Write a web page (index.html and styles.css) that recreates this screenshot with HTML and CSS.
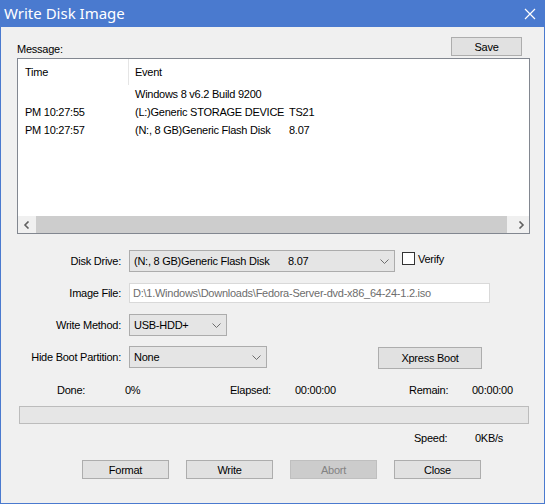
FILE: index.html
```html
<!DOCTYPE html>
<html lang="en">
<head>
    <meta charset="UTF-8">
    <title>Write Disk Image</title>
    <link rel="stylesheet" href="styles.css">
</head>
<body>
    <div class="window">
        <div class="titlebar">
            <span class="title">Write Disk Image</span>
            <svg class="close" width="12" height="12" viewBox="0 0 12 12">
                <path d="M1 1 L11 11 M11 1 L1 11" stroke="#fff" stroke-width="1.2" fill="none"/>
            </svg>
        </div>

        <div class="content">
            <div class="msg-head">
                <span>Message:</span>
                <button class="btn save">Save</button>
            </div>

            <div class="listbox">
                <div class="list-area">
                    <div class="list-header">
                        <div class="col-time">Time</div>
                        <div class="col-event">Event</div>
                    </div>
                    <div class="list-row">
                        <div class="col-time"></div>
                        <div class="col-event">Windows 8 v6.2 Build 9200</div>
                    </div>
                    <div class="list-row">
                        <div class="col-time">PM 10:27:55</div>
                        <div class="col-event"><span class="dev">(L:)Generic STORAGE DEVICE</span>TS21</div>
                    </div>
                    <div class="list-row">
                        <div class="col-time">PM 10:27:57</div>
                        <div class="col-event"><span class="dev">(N:, 8 GB)Generic Flash Disk</span>8.07</div>
                    </div>
                </div>
                <div class="hscroll">
                    <div class="arrow">
                        <svg width="8" height="8" viewBox="0 0 8 8"><path d="M5.5 0.5 L2 4 L5.5 7.5" stroke="#606060" stroke-width="1.6" fill="none"/></svg>
                    </div>
                    <div class="track"><div class="thumb"></div></div>
                    <div class="arrow">
                        <svg width="8" height="8" viewBox="0 0 8 8"><path d="M2.5 0.5 L6 4 L2.5 7.5" stroke="#606060" stroke-width="1.6" fill="none"/></svg>
                    </div>
                </div>
            </div>

            <div class="form">
                <div class="form-row">
                    <label class="lbl">Disk Drive:</label>
                    <div class="combo combo-disk">
                        <span><span class="dev">(N:, 8 GB)Generic Flash Disk</span>8.07</span>
                        <svg width="9" height="5" viewBox="0 0 9 5"><path d="M0.5 0.5 L4.5 4.5 L8.5 0.5" stroke="#6d6d6d" stroke-width="1" fill="none"/></svg>
                    </div>
                    <span class="checkbox"></span>
                    <span class="check-label">Verify</span>
                </div>
                <div class="form-row">
                    <label class="lbl lbl-input">Image File:</label>
                    <div class="textbox">D:\1.Windows\Downloads\Fedora-Server-dvd-x86_64-24-1.2.iso</div>
                </div>
                <div class="form-row">
                    <label class="lbl">Write Method:</label>
                    <div class="combo combo-method">
                        <span>USB-HDD+</span>
                        <svg width="9" height="5" viewBox="0 0 9 5"><path d="M0.5 0.5 L4.5 4.5 L8.5 0.5" stroke="#6d6d6d" stroke-width="1" fill="none"/></svg>
                    </div>
                </div>
                <div class="form-row last">
                    <label class="lbl">Hide Boot Partition:</label>
                    <div class="combo combo-hide">
                        <span>None</span>
                        <svg width="9" height="5" viewBox="0 0 9 5"><path d="M0.5 0.5 L4.5 4.5 L8.5 0.5" stroke="#6d6d6d" stroke-width="1" fill="none"/></svg>
                    </div>
                    <button class="btn xpress">Xpress Boot</button>
                </div>
            </div>

            <div class="stats">
                <span class="s-done">Done:</span>
                <span class="s-pct">0%</span>
                <span class="s-elapsed">Elapsed:</span>
                <span class="s-etime">00:00:00</span>
                <span class="s-remain">Remain:</span>
                <span>00:00:00</span>
            </div>

            <div class="progress"></div>

            <div class="speed">
                <span class="s-speed">Speed:</span>
                <span>0KB/s</span>
            </div>

            <div class="actions">
                <button class="btn action">Format</button>
                <button class="btn action">Write</button>
                <button class="btn action" disabled>Abort</button>
                <button class="btn action">Close</button>
            </div>
        </div>
    </div>
</body>
</html>
```

FILE: styles.css
```css
/* Base */
* {
    margin: 0;
    padding: 0;
    box-sizing: border-box;
}

body {
    background-color: #f0f0f0;
    font-family: 'Liberation Sans', Arial, sans-serif;
    font-size: 11px;
    letter-spacing: -0.25px;
    color: #000;
}

.window {
    width: 545px;
    height: 504px;
    background-color: #f0f0f0;
    border: 1px solid #4a7acf;
    border-top: none;
}

/* Title bar */
.titlebar {
    height: 27px;
    background-color: #4a7acf;
    display: flex;
    align-items: center;
    justify-content: space-between;
    padding: 0 9px 0 4px;
    margin: 0 -1px;
}

.title {
    font-family: 'Noto Sans', 'Open Sans', sans-serif;
    font-size: 15px;
    letter-spacing: 0;
    color: #fff;
    line-height: 27px;
}

.close {
    margin-top: 1px;
}

.content {
    padding-top: 10px;
}

/* Buttons */
.btn {
    font-family: 'Liberation Sans', Arial, sans-serif;
    font-size: 11px;
    letter-spacing: -0.25px;
    color: #000;
    background-color: #e1e1e1;
    border: 1px solid #adadad;
    height: 19px;
}

.btn:disabled {
    background-color: #cccccc;
    border-color: #bfbfbf;
    color: #838383;
}

/* Message header */
.msg-head {
    display: flex;
    justify-content: space-between;
    align-items: flex-end;
    height: 19px;
    padding: 0 22px 0 16px;
    line-height: 13px;
}

.save {
    width: 71px;
}

/* List view */
.listbox {
    margin: 2px 0 0 16px;
    width: 513px;
    height: 176px;
    border: 1px solid #828790;
    background-color: #fff;
}

.list-area {
    height: 157px;
}

.list-header, .list-row {
    display: flex;
}

.list-header {
    height: 26px;
    line-height: 26px;
}

.list-row {
    height: 18px;
    line-height: 18px;
}

.col-time {
    width: 111px;
    padding-left: 7px;
}

.list-header .col-time {
    border-right: 1px solid #e5e5e5;
}

.col-event {
    padding-left: 6px;
    white-space: nowrap;
}

.dev {
    display: inline-block;
    width: 154px;
}

.hscroll {
    display: flex;
    height: 17px;
    background-color: #f0f0f0;
}

.arrow {
    width: 17px;
    display: flex;
    align-items: center;
    justify-content: center;
}

.track {
    flex: 1;
    padding-left: 1px;
}

.thumb {
    width: 471px;
    height: 17px;
    background-color: #cdcdcd;
}

/* Form */
.form {
    margin-top: 16px;
}

.form-row {
    display: flex;
    align-items: flex-start;
    height: 32px;
}

.form-row.last {
    height: 22px;
}

.lbl {
    width: 120px;
    margin-right: 8px;
    text-align: right;
    line-height: 22px;
}

.lbl-input {
    line-height: 20px;
    margin-top: 1px;
}

.combo {
    height: 22px;
    border: 1px solid #acacac;
    background-color: #e5e5e5;
    display: flex;
    align-items: center;
    justify-content: space-between;
    padding: 0 5px 0 4px;
    white-space: nowrap;
}

.combo svg {
    flex-shrink: 0;
}

.combo-disk {
    width: 266px;
}

.combo-method {
    width: 98px;
}

.combo-hide {
    width: 138px;
}

.checkbox {
    width: 13px;
    height: 13px;
    border: 1px solid #333;
    background-color: #fff;
    margin: 2px 0 0 7px;
}

.check-label {
    margin: 2px 0 0 3px;
    line-height: 14px;
}

.textbox {
    width: 361px;
    height: 20px;
    margin-top: 1px;
    border: 1px solid #d9d9d9;
    background-color: #fff;
    color: #6d6d6d;
    padding-left: 3px;
    line-height: 18px;
    white-space: nowrap;
}

.xpress {
    width: 104px;
    height: 22px;
    margin: 1px 0 0 111px;
}

/* Status */
.stats {
    display: flex;
    margin-top: 15px;
    padding-left: 56px;
    line-height: 14px;
}

.s-done { width: 68px; }
.s-pct { width: 105px; }
.s-elapsed { width: 65px; }
.s-etime { width: 114px; }
.s-remain { width: 63px; }

.progress {
    margin: 9px 0 0 18px;
    width: 510px;
    height: 18px;
    border: 1px solid #bcbcbc;
    background-color: #e6e6e6;
}

.speed {
    display: flex;
    margin-top: 7px;
    padding-left: 413px;
    line-height: 14px;
}

.s-speed { width: 61px; }

.actions {
    display: flex;
    gap: 17px;
    margin-top: 15px;
    padding-left: 81px;
}

.action {
    width: 87px;
}
```
